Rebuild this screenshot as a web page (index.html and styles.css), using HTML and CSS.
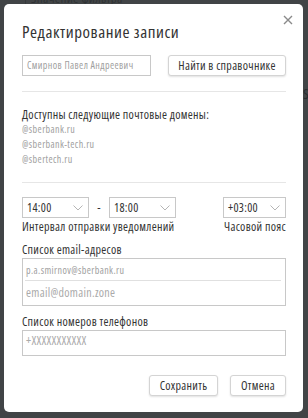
FILE: index.html
```html
<!DOCTYPE html>
<html lang="ru">
<head>
<meta charset="utf-8">
<link rel="stylesheet" href="styles.css">
</head>
<body>
<div class="page">
  <div class="filter-field">Значение фильтра</div>
  <div class="side-letter">S</div>
</div>
<div class="overlay">
  <div class="modal">
    <button class="close" aria-label="Закрыть">
      <svg width="10" height="10" viewBox="0 0 10 10"><path d="M1 1L9 9M9 1L1 9" stroke="#8a8a8a" stroke-width="1.4" fill="none"/></svg>
    </button>
    <h1 class="title">Редактирование записи</h1>
    <div class="row-search">
      <div class="input blur-text">Смирнов Павел Андреевич</div>
      <button class="btn">Найти в справочнике</button>
    </div>
    <hr class="divider">
    <div class="domains">
      <div>Доступны следующие почтовые домены:</div>
      <div class="blur-text">@sberbank.ru</div>
      <div class="blur-text">@sberbank-tech.ru</div>
      <div class="blur-text">@sbertech.ru</div>
    </div>
    <hr class="divider">
    <div class="time-row">
      <div class="time-group">
        <div class="selects">
          <div class="select s-time"><span>14:00</span><svg width="10" height="6" viewBox="0 0 10 6"><path d="M0.5 0.5L5 5L9.5 0.5" stroke="#b5b5b5" fill="none"/></svg></div>
          <span class="dash">-</span>
          <div class="select s-time"><span>18:00</span><svg width="10" height="6" viewBox="0 0 10 6"><path d="M0.5 0.5L5 5L9.5 0.5" stroke="#b5b5b5" fill="none"/></svg></div>
        </div>
        <div class="label">Интервал отправки уведомлений</div>
      </div>
      <div class="tz-group">
        <div class="select s-tz"><span>+03:00</span><svg width="10" height="6" viewBox="0 0 10 6"><path d="M0.5 0.5L5 5L9.5 0.5" stroke="#b5b5b5" fill="none"/></svg></div>
        <div class="label">Часовой пояс</div>
      </div>
    </div>
    <div class="field-label first">Список email-адресов</div>
    <div class="list-box">
      <div class="list-item filled blur-text">p.a.smirnov@sberbank.ru</div>
      <div class="list-item placeholder">email@domain.zone</div>
    </div>
    <div class="field-label">Список номеров телефонов</div>
    <div class="list-box phone">
      <div class="list-item placeholder">+XXXXXXXXXXX</div>
    </div>
    <div class="actions">
      <button class="btn btn-save">Сохранить</button>
      <button class="btn btn-cancel">Отмена</button>
    </div>
  </div>
</div>
</body>
</html>
```
FILE: styles.css
```css
* { box-sizing: border-box; }
html, body { margin: 0; padding: 0; }
body {
  width: 308px;
  height: 418px;
  overflow: hidden;
  font-family: "Open Sans", sans-serif;
  font-stretch: 75%;
  font-size: 12px;
  letter-spacing: 0.3px;
  color: #333;
  background: #fff;
}
.page { position: relative; height: 418px; background: #f4f4f4; overflow: hidden; }
.filter-field {
  position: absolute;
  left: 25px;
  top: -12px;
  height: 20px;
  padding-left: 5px;
  border-left: 1px solid #999;
  font-size: 13px;
  line-height: 20px;
  color: #666;
  white-space: nowrap;
}
.side-letter {
  position: absolute;
  left: 303px;
  top: 84px;
  font-size: 14px;
  color: #333;
}
.overlay {
  position: fixed;
  inset: 0;
  background: rgba(40, 43, 46, 0.88);
}
.modal {
  position: absolute;
  left: 4px;
  top: 4px;
  width: 299px;
  height: 408px;
  background: #fff;
  border-radius: 5px;
  padding: 18px 17px 19px 18px;
  display: flex;
  flex-direction: column;
  white-space: nowrap;
}
.close {
  position: absolute;
  right: 10px;
  top: 11px;
  border: 0;
  background: none;
  padding: 0;
  width: 10px;
  height: 10px;
  display: flex;
}
.title {
  margin: 0;
  font-size: 17px;
  letter-spacing: 0.55px;
  font-weight: normal;
  line-height: 20px;
  color: #333;
}
.row-search {
  margin-top: 13px;
  display: flex;
  justify-content: space-between;
  align-items: center;
}
.input {
  width: 129px;
  height: 21px;
  border: 1px solid #c8c8c8;
  padding: 0 4px;
  line-height: 19px;
  font-size: 10px;
  overflow: hidden;
}
.blur-text { color: #a0a0a0; letter-spacing: 0.4px; }
.btn {
  font-family: inherit;
  font-stretch: inherit;
  letter-spacing: inherit;
  font-size: 12px;
  color: #333;
  background: #fff;
  border: 1px solid #d4d4d4;
  border-radius: 3px;
  box-shadow: 0 1px 2px rgba(0,0,0,0.12);
  height: 21px;
  padding: 0;
  line-height: 19px;
  white-space: nowrap;
}
.row-search .btn { width: 118px; }
.divider {
  margin: 15px 0 0;
  border: 0;
  border-top: 1px solid #e6e6e6;
  height: 0;
}
.domains {
  margin-top: 15px;
  line-height: 15px;
}
.domains .blur-text { font-size: 10px; }
.time-row {
  margin-top: 14px;
  display: flex;
  justify-content: space-between;
}
.selects { display: flex; align-items: center; }
.select {
  height: 21px;
  border: 1px solid #c8c8c8;
  display: flex;
  align-items: center;
  justify-content: space-between;
  padding: 0 5px 0 4px;
}
.s-time { width: 67px; }
.s-tz { width: 63px; }
.dash { width: 20px; text-align: center; }
.label { line-height: 15px; margin-top: 1px; }
.tz-group { display: flex; flex-direction: column; align-items: flex-end; }
.field-label { margin-top: 8px; line-height: 15px; }
.field-label.first { margin-top: 8px; }
.list-box {
  margin-top: 1px;
  border: 1px solid #c8c8c8;
  height: 48px;
  padding: 0 4px 0 2px;
}
.list-item {
  padding-left: 1px;
}
.list-item.filled { font-size: 10px; border-bottom: 1px solid #e0e0e0; height: 22px; line-height: 22px; }
.list-item.placeholder { height: 24px; line-height: 24px; }
.list-box.phone { height: 26px; }
.list-box.phone .list-item { height: 24px; line-height: 20px; }
.placeholder { color: #aaa; }
.actions {
  margin-top: 19px;
  display: flex;
  justify-content: flex-end;
  gap: 12px;
}
.btn-save { width: 69px; }
.btn-cancel { width: 56px; }
```
